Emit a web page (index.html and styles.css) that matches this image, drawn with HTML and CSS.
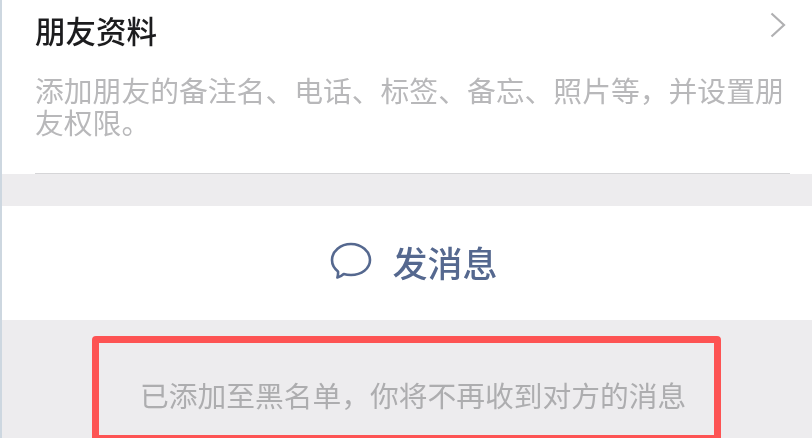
FILE: index.html
```html
<!DOCTYPE html>
<html lang="zh-CN">
<head>
<meta charset="utf-8">
<title>朋友资料</title>
<link rel="stylesheet" href="styles.css">
</head>
<body>
<main class="screen">
  <section class="card">
    <div class="card-head">
      <h2 class="title">朋友资料</h2>
      <svg class="chevron" viewBox="0 0 16 26" width="16" height="26" aria-hidden="true"><path d="M1.500 1.500 14 13 1.500 24.500" fill="none" stroke="#b0b0b2" stroke-width="2.200"/></svg>
    </div>
    <p class="desc">添加朋友的备注名、电话、标签、备忘、照片等，并设置朋友权限。</p>
    <div class="rule"></div>
  </section>
  <button class="send">
    <svg class="bubble" viewBox="0 0 42 38" width="42" height="38" aria-hidden="true"><path d="M21 2C10.500 2 2 9.400 2 18c0 4.500 2.300 8.500 6 11.400.2 1.900 0 4-.6 6.100 2.700-.8 4.800-2.100 6.300-3.500 2.300.7 4.700 1 7.300 1 10.500 0 19-6.300 19-14.900S31.500 2 21 2Z" fill="none" stroke="#55688f" stroke-width="2.600" stroke-linejoin="round"/></svg>
    <span class="send-label">发消息</span>
  </button>
  <p class="notice">已添加至黑名单，你将不再收到对方的消息</p>
  <div class="highlight"></div>
</main>
</body>
</html>
```
FILE: styles.css
```css
* { box-sizing: border-box; }
html, body { margin: 0; padding: 0; }
body {
  width: 812px;
  height: 438px;
  overflow: hidden;
  background: #edecee;
  font-family: "Noto Sans CJK SC", "Liberation Sans", sans-serif;
}
.screen {
  position: relative;
  width: 812px;
  height: 438px;
  overflow: hidden;
  border-left: 2px solid #cdd7e0;
  display: flex;
  flex-direction: column;
}
.card {
  height: 174px;
  background: #fff;
  padding: 0 0 0 33px;
  display: flex;
  flex-direction: column;
}
.card-head {
  height: 68px;
  padding-right: 26px;
  display: flex;
  justify-content: space-between;
  align-items: flex-start;
}
.title {
  margin: 10px 0 0;
  font-size: 30.500px;
  line-height: 40px;
  font-weight: 500;
  color: #1c1c1e;
  filter: blur(0.4px);
}
.chevron { margin-top: 12px; }
.desc {
  margin: 6px 20px 0 0;
  font-size: 28.800px;
  line-height: 32px;
  height: 64px;
  color: #b8b8ba;
  filter: blur(0.4px);
}
.rule {
  margin-top: auto;
  margin-right: 22px;
  height: 1px;
  background: #d6d6d8;
}
.send {
  margin: 32px 0 0;
  height: 114px;
  flex: none;
  border: 0;
  padding: 0 0 4px 14px;
  background: #fff;
  font-family: inherit;
  display: flex;
  align-items: center;
  justify-content: center;
  gap: 20px;
}
.send-label {
  font-size: 35px;
  font-weight: 500;
  color: #55688f;
  filter: blur(0.4px);
}
.notice {
  margin: 50px 0 0 138px;
  font-size: 28.750px;
  line-height: 50px;
  white-space: nowrap;
  color: #adadaf;
  filter: blur(0.4px);
}
.highlight {
  position: absolute;
  left: 90px;
  top: 336px;
  width: 629px;
  height: 102px;
  border: 7px solid #fd5353;
  border-bottom-width: 3px;
  border-radius: 4px 4px 0 0;
}
```
